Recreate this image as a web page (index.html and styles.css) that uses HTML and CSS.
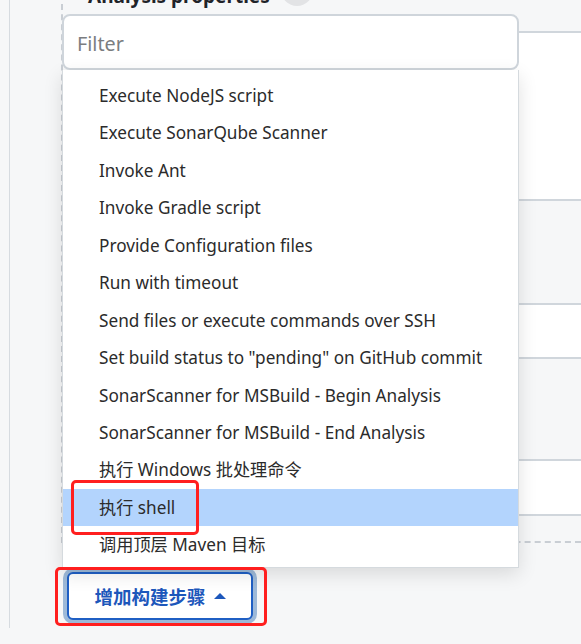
FILE: index.html
```html
<!DOCTYPE html>
<html lang="zh-CN">
<head>
<meta charset="utf-8">
<title>Add build step</title>
<link rel="stylesheet" href="styles.css">
</head>
<body>
<div class="frame">
  <section class="step">
    <div class="title-row">
      <span class="title">Analysis properties</span>
      <span class="help">?</span>
    </div>
    <div class="textarea"></div>
    <div class="label-gap"></div>
    <div class="input"></div>
    <div class="label-gap tall"></div>
    <div class="input second"></div>
    <div class="tail-gap"></div>
  </section>
  <div class="actions">
    <button class="add-btn" type="button">增加构建步骤 <span class="caret"></span></button>
  </div>
</div>

<div class="dropdown">
  <div class="filter">Filter</div>
  <ul class="menu">
    <li>Execute NodeJS script</li>
    <li>Execute SonarQube Scanner</li>
    <li>Invoke Ant</li>
    <li>Invoke Gradle script</li>
    <li>Provide Configuration files</li>
    <li>Run with timeout</li>
    <li>Send files or execute commands over SSH</li>
    <li>Set build status to "pending" on GitHub commit</li>
    <li>SonarScanner for MSBuild - Begin Analysis</li>
    <li>SonarScanner for MSBuild - End Analysis</li>
    <li>执行 Windows 批处理命令</li>
    <li class="active">执行 shell</li>
    <li>调用顶层 Maven 目标</li>
  </ul>
</div>

<div class="mark mark-item"></div>
<div class="mark mark-btn"></div>
</body>
</html>
```

FILE: styles.css
```css
* { box-sizing: border-box; }
html, body {
  margin: 0;
  padding: 0;
}
body {
  width: 581px;
  height: 644px;
  overflow: hidden;
  background: #f6f7f8;
  font-family: "Noto Sans", "Noto Sans CJK SC", sans-serif;
  color: #2b2b2b;
  position: relative;
}
.frame {
  margin-left: 9px;
  border-left: 1px solid #d6dbe0;
  height: 644px;
  padding-left: 51px;
}
.step {
  border-left: 2px dashed #c9ced4;
  border-bottom: 2px dashed #c9ced4;
  padding-left: 25px;
}
.title-row {
  display: flex;
  align-items: flex-start;
  height: 24px;
  margin-top: -16px;
}
.title {
  font-weight: 700;
  font-size: 19px;
  line-height: 24px;
  color: #1f2329;
}
.help {
  width: 32px;
  height: 32px;
  border-radius: 50%;
  background: #e2e3e5;
  margin-left: 11px;
  margin-top: -10px;
  display: flex;
  align-items: center;
  justify-content: center;
  font-weight: 700;
  font-size: 15px;
}
.textarea {
  margin-top: 23px;
  height: 170px;
  margin-right: -40px;
  background: #fff;
  border: 2px solid #d0d6dc;
  border-radius: 6px;
}
.label-gap { height: 102px; }
.label-gap.tall { height: 100px; }
.input {
  height: 56px;
  margin-right: -40px;
  background: #fff;
  border: 2px solid #d0d6dc;
  border-radius: 6px;
}
.input.second { height: 57px; }
.tail-gap { height: 25px; }
.actions {
  padding-top: 29px;
  padding-left: 6px;
}
.add-btn {
  width: 186px;
  height: 48px;
  background: #fff;
  border: 2px solid #1f5fc4;
  border-radius: 6px;
  box-shadow: 0 0 0 4px #9db9d8;
  color: #1d57bb;
  font-family: "Noto Sans CJK SC", sans-serif;
  font-weight: 700;
  font-size: 18.5px;
  display: flex;
  align-items: center;
  justify-content: center;
  gap: 6px;
  padding: 0;
}
.caret {
  width: 0;
  height: 0;
  border-left: 6px solid transparent;
  border-right: 6px solid transparent;
  border-bottom: 6px solid #1d57bb;
  margin-left: 2px;
}
.dropdown {
  position: absolute;
  left: 62px;
  top: 14px;
  width: 457px;
}
.filter {
  height: 56px;
  background: #fff;
  border: 2px solid #cfd5db;
  border-radius: 8px;
  padding-left: 13px;
  padding-top: 3px;
  display: flex;
  align-items: center;
  font-size: 19.8px;
  color: #7b7d80;
}
.menu {
  list-style: none;
  margin: 0;
  padding: 7px 0 3px;
  background: #fff;
  border: 1px solid #d5dade;
  border-top: none;
  box-shadow: 0 6px 18px rgba(0, 0, 0, 0.12);
}
.menu li {
  height: 37.45px;
  line-height: 37.45px;
  padding-left: 36px;
  font-size: 17.2px;
  white-space: nowrap;
}
.menu li.active {
  background: #b3d4fd;
}
.mark {
  position: absolute;
  border: 3px solid #ff1f1f;
  border-radius: 5px;
}
.mark-item {
  left: 71px;
  top: 480px;
  width: 128px;
  height: 55px;
}
.mark-btn {
  left: 55px;
  top: 567px;
  width: 212px;
  height: 59px;
}
```
